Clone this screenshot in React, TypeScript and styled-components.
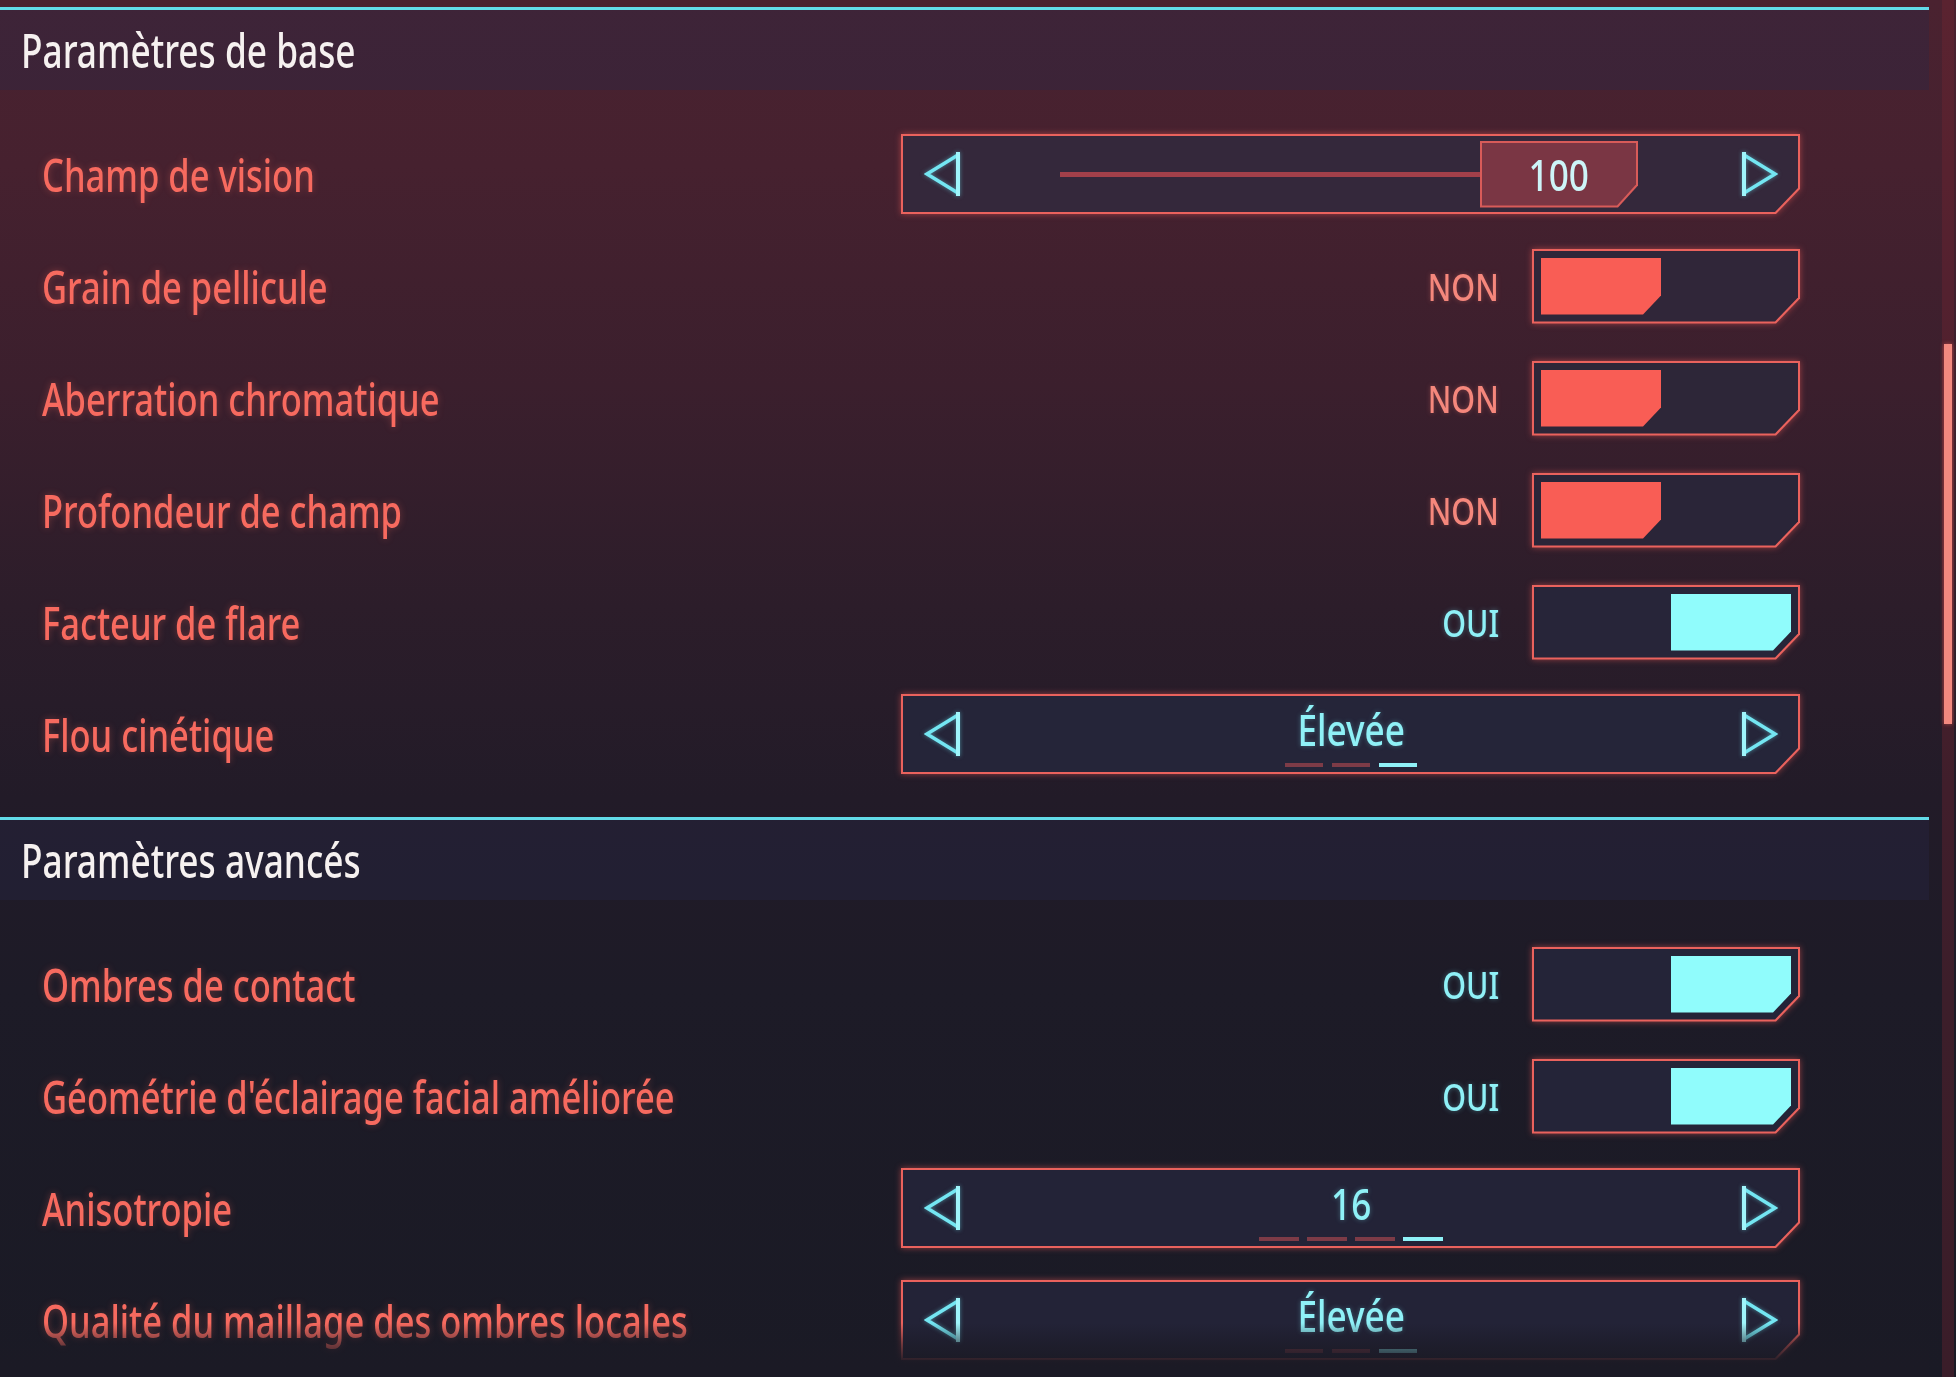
import React from "react";
import styled, { createGlobalStyle } from "styled-components";

const FONT = `"Noto Sans", "Open Sans", "DejaVu Sans", sans-serif`;

const RED = "#f76a5f";
const CYAN = "#8ff1f7";
const FRAME = "#ea625d";

const GlobalStyle = createGlobalStyle`
  html, body {
    margin: 0;
    padding: 0;
  }
  body {
    width: 1956px;
    height: 1377px;
    overflow: hidden;
    background: linear-gradient(
      180deg,
      #4a2230 0%,
      #46212f 12%,
      #3b1f2d 28%,
      #2c1d2a 44%,
      #221b28 58%,
      #1d1b27 72%,
      #1a1a25 100%
    );
    font-family: ${FONT};
    font-weight: 500;
  }
`;

// the game font is very narrow; squeeze the glyphs to get the same look
const Squeeze = styled.span<{ $x?: number; $origin?: string }>`
  display: inline-block;
  white-space: nowrap;
  transform: scaleX(${(p) => p.$x ?? 0.75});
  transform-origin: ${(p) => p.$origin ?? "left"} center;
`;

const Page = styled.div`
  display: flex;
  width: 1956px;
  height: 1377px;
  overflow: hidden;
`;

const Panel = styled.div`
  position: relative;
  width: 1929px;
  height: 100%;
  padding-top: 7px;
  box-sizing: border-box;
`;

const Section = styled.section<{ $gapBelow?: number }>`
  padding-bottom: ${(p) => p.$gapBelow ?? 0}px;
`;

const SectionHeader = styled.h2`
  margin: 0;
  height: 80px;
  display: flex;
  align-items: center;
  padding-left: 21px;
  border-top: 3px solid #62dbe8;
  background: rgba(40, 40, 72, 0.35);
  color: #f6f1f0;
  font-size: 47px;
  font-weight: 500;
`;

const Rows = styled.div`
  padding-top: 28px;
`;

const Row = styled.div`
  height: 112px;
  display: flex;
  align-items: center;
  justify-content: space-between;
  padding: 0 129px 0 42px;
`;

const Label = styled.span`
  flex: 0 1 auto;
  min-width: 0;
  color: ${RED};
  font-size: 46px;
  white-space: nowrap;
  text-shadow: 0 0 8px rgba(247, 106, 95, 0.35);
`;

const ControlGroup = styled.div`
  display: flex;
  align-items: center;
`;

const FrameGlow = styled.div`
  flex: none;
  filter: drop-shadow(0 0 3px rgba(240, 90, 88, 0.55));
`;

const FrameOuter = styled.div<{ $w: number; $h: number }>`
  width: ${(p) => p.$w}px;
  height: ${(p) => p.$h}px;
  padding: 2px;
  box-sizing: border-box;
  background: ${FRAME};
  clip-path: polygon(0 0, 100% 0, 100% calc(100% - 25px), calc(100% - 24px) 100%, 0 100%);
`;

const FrameInner = styled.div<{ $pad?: string; $fill: string; $justify?: string }>`
  height: 100%;
  box-sizing: border-box;
  display: flex;
  align-items: center;
  justify-content: ${(p) => p.$justify ?? "flex-start"};
  padding: ${(p) => p.$pad ?? "0"};
  background: ${(p) => p.$fill};
  clip-path: polygon(0 0, 100% 0, 100% calc(100% - 24px), calc(100% - 23px) 100%, 0 100%);
`;

const ArrowSvg = styled.svg`
  flex: none;
  width: 38px;
  height: 44px;
  filter: drop-shadow(0 0 2px rgba(110, 230, 245, 0.5));
`;

const Arrow = ({ dir }: { dir: "left" | "right" }) => (
  <ArrowSvg viewBox="0 0 38 44">
    <g
      transform={dir === "right" ? "translate(38 0) scale(-1 1)" : undefined}
      fill="none"
      stroke="#74e6f2"
      strokeWidth="3.5"
    >
      <path d="M34 3 L3 22 L34 41" />
      <path d="M34 0 L34 44" strokeWidth="4" stroke="#9ff5fb" />
    </g>
  </ArrowSvg>
);

const TrackArea = styled.div`
  flex: 1;
  display: flex;
  align-items: center;
  margin: 0 102px 0 98px;
`;

const TrackLine = styled.div`
  flex: 1;
  height: 5px;
  background: #a2404a;
`;

const ThumbOuter = styled.div`
  width: 158px;
  height: 67px;
  padding: 2px;
  box-sizing: border-box;
  background: #d85b59;
  clip-path: polygon(0 0, 100% 0, 100% calc(100% - 22px), calc(100% - 20px) 100%, 0 100%);
`;

const ThumbInner = styled.div`
  height: 100%;
  display: flex;
  align-items: center;
  justify-content: center;
  background: #7a3644;
  color: #cdf4f8;
  font-size: 44px;
  clip-path: polygon(0 0, 100% 0, 100% calc(100% - 21px), calc(100% - 19px) 100%, 0 100%);
`;

const SelectBody = styled.div`
  flex: 1;
  display: flex;
  flex-direction: column;
  align-items: center;
  gap: 12px;
  padding-top: 6px;
`;

const SelectValue = styled.span`
  color: ${CYAN};
  font-size: 44px;
  line-height: 44px;
  text-shadow: 0 0 6px rgba(120, 230, 245, 0.35);
`;

const Dashes = styled.div<{ $gap: number }>`
  display: flex;
  gap: ${(p) => p.$gap}px;
`;

const Dash = styled.span<{ $active: boolean; $w: number }>`
  width: ${(p) => p.$w}px;
  height: 4px;
  background: ${(p) => (p.$active ? CYAN : "#7d3b47")};
`;

const ToggleText = styled.span<{ $on: boolean }>`
  margin-right: 33px;
  font-size: 38px;
  color: ${(p) => (p.$on ? CYAN : "#f5877c")};
  text-shadow: 0 0 6px ${(p) => (p.$on ? "rgba(120,230,245,0.35)" : "rgba(245,120,110,0.35)")};
`;

const ToggleFill = styled.div<{ $on: boolean }>`
  width: 120px;
  height: 100%;
  background: ${(p) => (p.$on ? "#90fcfc" : "#f95d55")};
  clip-path: polygon(0 0, 100% 0, 100% calc(100% - 19px), calc(100% - 18px) 100%, 0 100%);
`;

const ScrollColumn = styled.div`
  flex: 1;
  display: flex;
  justify-content: flex-end;
  padding-right: 2px;
`;

const ScrollTrack = styled.div`
  width: 12px;
  height: 100%;
  background: rgba(120, 36, 48, 0.35);
`;

const ScrollThumb = styled.div`
  margin: 344px 2px 0;
  height: 380px;
  background: #f2897f;
  box-shadow: 0 0 4px rgba(240, 100, 90, 0.6);
`;

const BottomFade = styled.div`
  position: absolute;
  left: 0;
  right: 0;
  bottom: 0;
  height: 54px;
  pointer-events: none;
  background: linear-gradient(
    180deg,
    rgba(27, 26, 37, 0) 0%,
    rgba(27, 26, 37, 0.6) 40%,
    rgba(27, 26, 37, 0.95) 72%,
    #1b1a25 100%
  );
`;

type Base = { label: string; fill: string };
type Setting = Base &
  (
    | { kind: "slider"; value: number }
    | { kind: "toggle"; on: boolean }
    | { kind: "select"; value: string; steps: number; index: number; dashW: number; dashGap: number }
  );

const basic: Setting[] = [
  { kind: "slider", label: "Champ de vision", value: 100, fill: "#34283b" },
  { kind: "toggle", label: "Grain de pellicule", on: false, fill: "#302639" },
  { kind: "toggle", label: "Aberration chromatique", on: false, fill: "#2d2638" },
  { kind: "toggle", label: "Profondeur de champ", on: false, fill: "#2a2538" },
  { kind: "toggle", label: "Facteur de flare", on: true, fill: "#272539" },
  { kind: "select", label: "Flou cinétique", value: "Élevée", steps: 3, index: 2, dashW: 38, dashGap: 9, fill: "#252539" },
];

const advanced: Setting[] = [
  { kind: "toggle", label: "Ombres de contact", on: true, fill: "#242438" },
  { kind: "toggle", label: "Géométrie d'éclairage facial améliorée", on: true, fill: "#242438" },
  { kind: "select", label: "Anisotropie", value: "16", steps: 4, index: 3, dashW: 40, dashGap: 8, fill: "#232337" },
  { kind: "select", label: "Qualité du maillage des ombres locales", value: "Élevée", steps: 3, index: 2, dashW: 38, dashGap: 9, fill: "#232337" },
];

const Control = ({ s }: { s: Setting }) => {
  if (s.kind === "slider") {
    return (
      <FrameGlow>
        <FrameOuter $w={899} $h={80}>
          <FrameInner $pad="0 20px 0 21px" $fill={s.fill}>
            <Arrow dir="left" />
            <TrackArea>
              <TrackLine />
              <ThumbOuter>
                <ThumbInner>
                  <Squeeze $x={0.8} $origin="center">{s.value}</Squeeze>
                </ThumbInner>
              </ThumbOuter>
            </TrackArea>
            <Arrow dir="right" />
          </FrameInner>
        </FrameOuter>
      </FrameGlow>
    );
  }
  if (s.kind === "toggle") {
    return (
      <ControlGroup>
        <ToggleText $on={s.on}>
          <Squeeze $x={0.8} $origin="right">{s.on ? "OUI" : "NON"}</Squeeze>
        </ToggleText>
        <FrameGlow>
          <FrameOuter $w={268} $h={75}>
            <FrameInner $pad="7px" $fill={s.fill} $justify={s.on ? "flex-end" : "flex-start"}>
              <ToggleFill $on={s.on} />
            </FrameInner>
          </FrameOuter>
        </FrameGlow>
      </ControlGroup>
    );
  }
  return (
    <FrameGlow>
      <FrameOuter $w={899} $h={80}>
        <FrameInner $pad="0 20px 0 21px" $fill={s.fill}>
          <Arrow dir="left" />
          <SelectBody>
            <SelectValue>
              <Squeeze $x={0.8} $origin="center">{s.value}</Squeeze>
            </SelectValue>
            <Dashes $gap={s.dashGap}>
              {Array.from({ length: s.steps }).map((_, i) => (
                <Dash key={i} $w={s.dashW} $active={i === s.index} />
              ))}
            </Dashes>
          </SelectBody>
          <Arrow dir="right" />
        </FrameInner>
      </FrameOuter>
    </FrameGlow>
  );
};

const SettingRow = ({ s }: { s: Setting }) => (
  <Row>
    <Label>
      <Squeeze>{s.label}</Squeeze>
    </Label>
    <Control s={s} />
  </Row>
);

export default function App() {
  return (
    <>
      <GlobalStyle />
      <Page>
        <Panel>
          <Section $gapBelow={27}>
            <SectionHeader>
              <Squeeze>Paramètres de base</Squeeze>
            </SectionHeader>
            <Rows>
              {basic.map((s) => (
                <SettingRow key={s.label} s={s} />
              ))}
            </Rows>
          </Section>
          <Section>
            <SectionHeader>
              <Squeeze>Paramètres avancés</Squeeze>
            </SectionHeader>
            <Rows>
              {advanced.map((s) => (
                <SettingRow key={s.label} s={s} />
              ))}
            </Rows>
          </Section>
          <BottomFade />
        </Panel>
        <ScrollColumn>
          <ScrollTrack>
            <ScrollThumb />
          </ScrollTrack>
        </ScrollColumn>
      </Page>
    </>
  );
}
